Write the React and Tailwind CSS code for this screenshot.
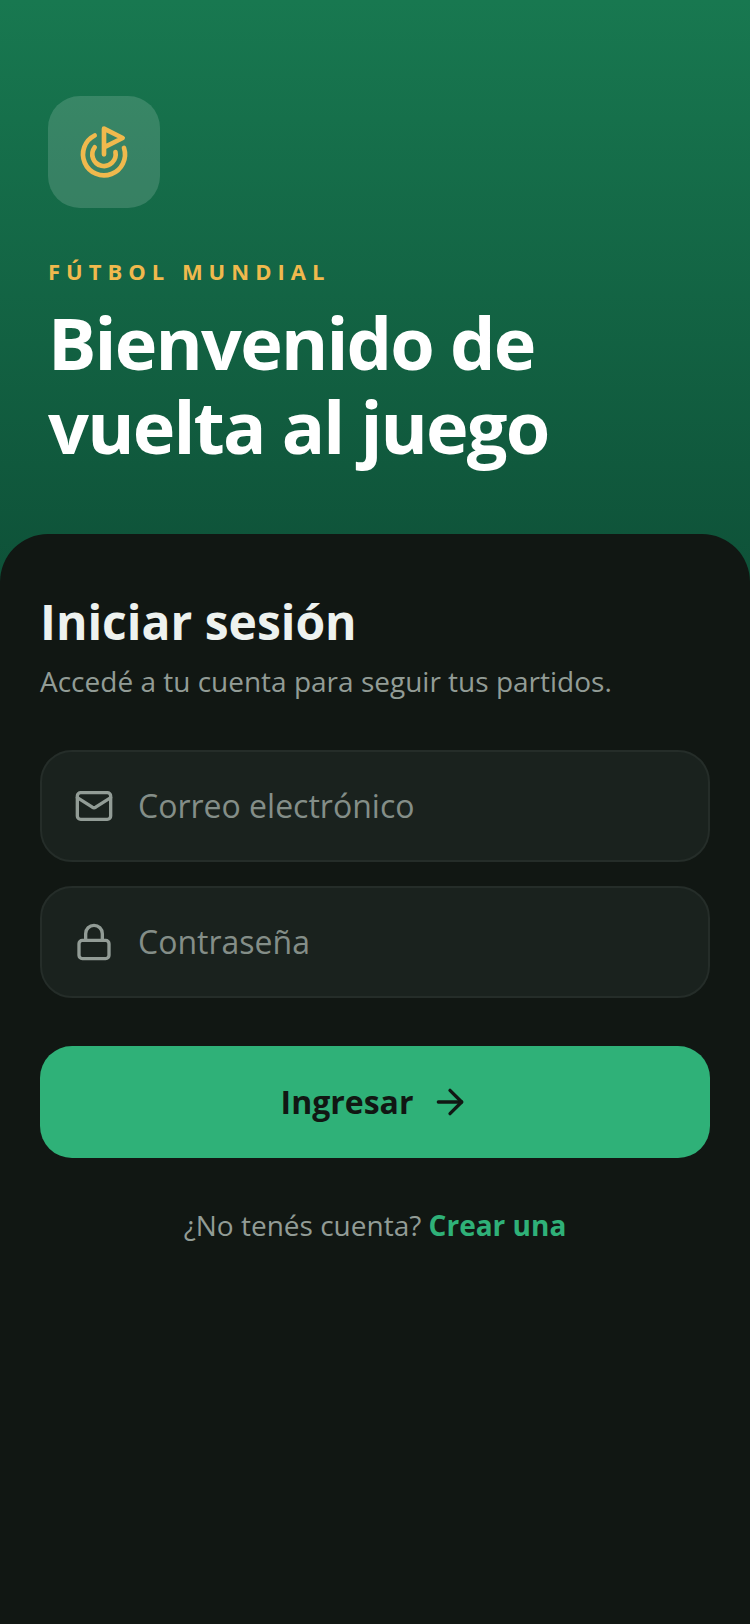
import React from 'react';
import { Goal, Mail, Lock, ArrowRight } from 'lucide-react';

const fields = [
  { label: 'Correo electrónico', icon: Mail },
  { label: 'Contraseña', icon: Lock },
];

const App = () => {
  return (
    <div className="w-[750px] h-[1624px] flex flex-col overflow-hidden bg-[#111713] font-['Open_Sans',sans-serif]">
      {/* Header */}
      <div className="h-[590px] shrink-0 px-12 pt-24 bg-gradient-to-b from-[#187850] to-[#0e5138]">
        <div className="w-28 h-28 rounded-[32px] bg-white/15 flex items-center justify-center">
          <Goal className="w-14 h-14 text-[#f0b94d]" strokeWidth={2} />
        </div>
        <p className="mt-[47px] text-[22px] leading-[32px] font-bold tracking-[6px] text-[#f0b94d]">
          FÚTBOL MUNDIAL
        </p>
        <h1 className="mt-[13px] text-[72px] leading-[84px] font-bold tracking-[-0.025em] text-white">
          Bienvenido de
          <br />
          vuelta al juego
        </h1>
      </div>

      {/* Sheet */}
      <div className="-mt-14 flex-1 rounded-t-[48px] bg-[#111713] px-10 pt-[54px]">
        <h2 className="text-[48px] leading-[68px] font-bold text-[#eef2ef]">Iniciar sesión</h2>
        <p className="mt-[5px] text-[28px] leading-[40px] text-[#929c96]">
          Accedé a tu cuenta para seguir tus partidos.
        </p>

        <div className="mt-[49px] flex flex-col gap-6">
          {fields.map((field) => {
            const Icon = field.icon;
            return (
              <div
                key={field.label}
                className="h-28 rounded-[32px] border-2 border-[#252d29] bg-[#1a221e] px-8 flex items-center gap-6"
              >
                <Icon className="w-10 h-10 text-[#929c96]" strokeWidth={2} />
                <span className="text-[32px] text-[#848e88]">{field.label}</span>
              </div>
            );
          })}
        </div>

        <button className="mt-12 w-full h-28 rounded-[32px] bg-[#2fb178] pl-[1px] flex items-center justify-center gap-[17px] text-[#111713]">
          <span className="text-[32px] font-bold">Ingresar</span>
          <ArrowRight className="w-10 h-10" strokeWidth={2} />
        </button>

        <p className="mt-[47px] text-center text-[28px] leading-[40px] text-[#929c96]">
          ¿No tenés cuenta? <span className="font-bold text-[#2fb178]">Crear una</span>
        </p>
      </div>
    </div>
  );
};

export default App;
